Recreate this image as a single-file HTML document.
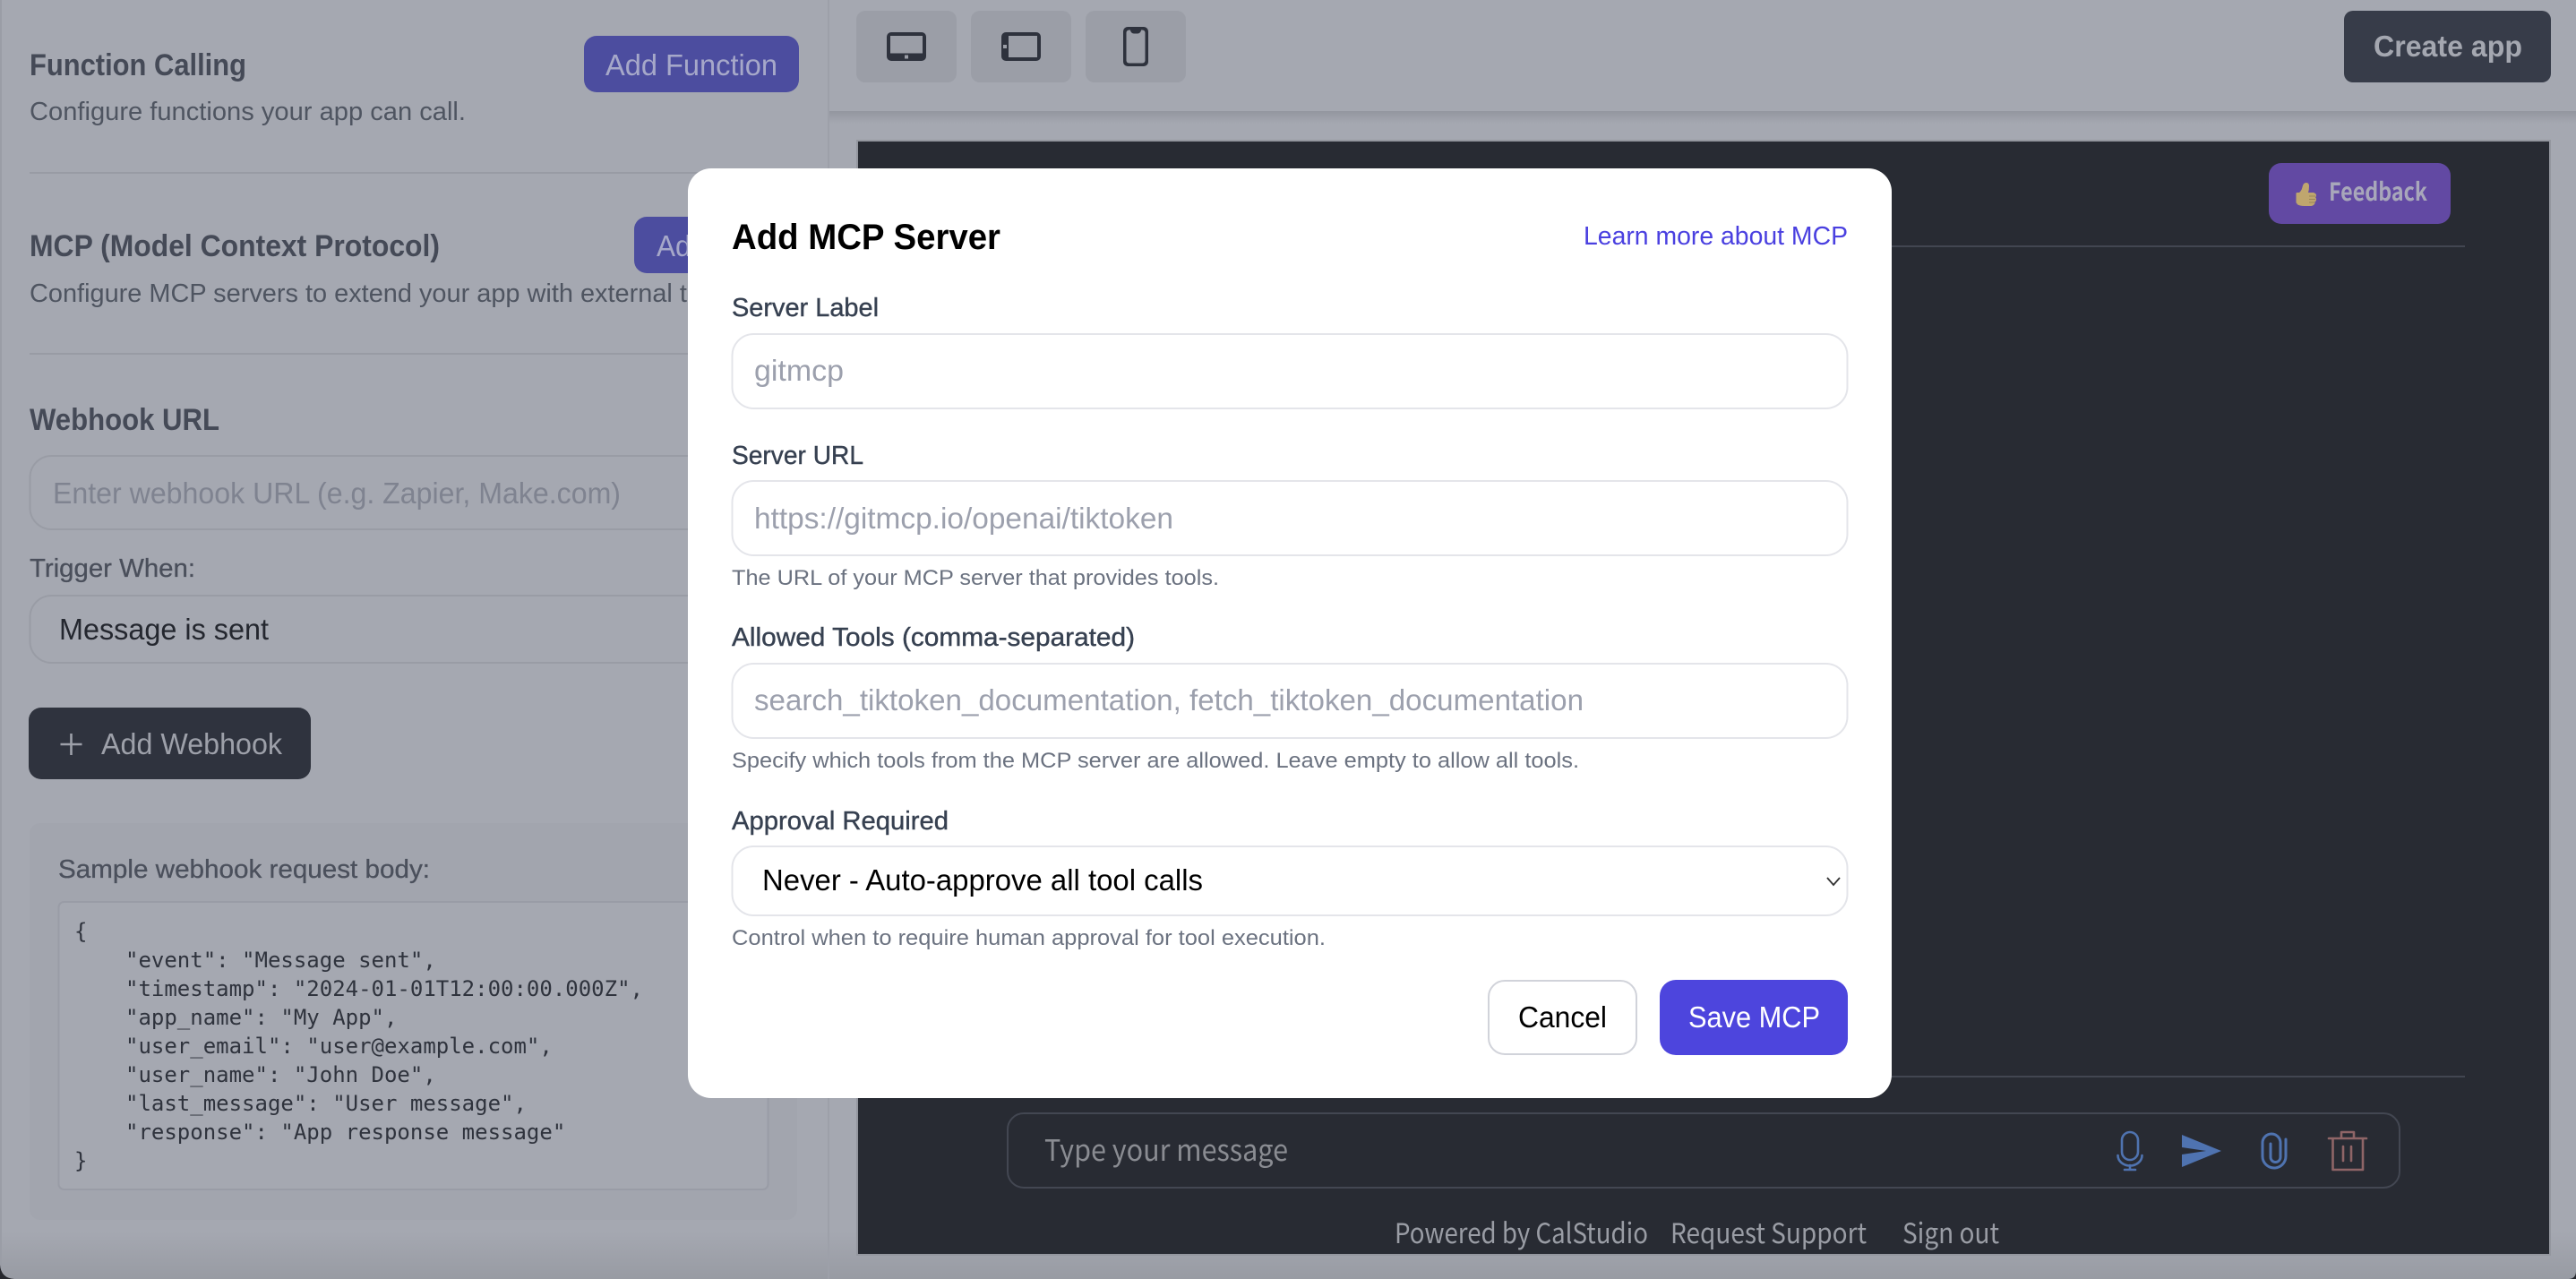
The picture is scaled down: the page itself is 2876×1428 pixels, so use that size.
<!DOCTYPE html>
<html lang="en">
<head>
<meta charset="utf-8">
<title>Add MCP Server</title>
<style>
html,body{margin:0;padding:0;width:2876px;height:1428px;overflow:hidden;background:#a5a8b1}
svg{display:block;position:absolute;left:0;top:0}
text{font-family:"Liberation Sans","Noto Sans CJK SC",sans-serif;white-space:pre}
.n{font-family:"Noto Sans CJK JP","Liberation Sans",sans-serif}
.m{font-family:"DejaVu Sans Mono","Liberation Mono",monospace;font-size:24px;fill:#2f333d}
.l{stroke:#374151;stroke-width:.4px}
</style>
</head>
<body>
<svg width="2876" height="1428" viewBox="0 0 2876 1428" xmlns="http://www.w3.org/2000/svg">
<defs>
<linearGradient id="sh" x1="0" y1="0" x2="0" y2="1"><stop offset="0" stop-color="#93969f"/><stop offset="1" stop-color="#a5a8b1"/></linearGradient>
<linearGradient id="bt" x1="0" y1="0" x2="0" y2="1"><stop offset="0" stop-color="#a5a8b1"/><stop offset="1" stop-color="#989ba3"/></linearGradient>
</defs>
<rect width="2876" height="1428" fill="#a5a8b1"/>
<rect x="0" y="1375" width="2876" height="53" fill="url(#bt)"/>
<rect x="0" y="0" width="2" height="1428" fill="#9a9da6"/>
<path d="M0 1412 Q1 1427 16 1428 H0Z" fill="#26282e"/>
<path d="M2876 1420 Q2875.500 1427.500 2868 1428 H2876Z" fill="#26282e"/>
<rect x="924" y="0" width="2" height="1428" fill="#9da0a9"/>

<!-- left panel -->
<text x="33" y="84" font-size="34" font-weight="700" fill="#454a57" textLength="242" lengthAdjust="spacingAndGlyphs">Function Calling</text>
<text x="33" y="134" font-size="28.500" fill="#4f5561" textLength="487" lengthAdjust="spacingAndGlyphs">Configure functions your app can call.</text>
<rect x="652" y="40" width="240" height="63" rx="14" fill="#4c4d9f"/>
<text x="676" y="84" font-size="33" fill="#a6a8c9" textLength="192" lengthAdjust="spacingAndGlyphs">Add Function</text>
<rect x="33" y="192" width="860" height="2" fill="#989ba4"/>

<text x="33" y="286" font-size="34" font-weight="700" fill="#454a57" textLength="458" lengthAdjust="spacingAndGlyphs">MCP (Model Context Protocol)</text>
<rect x="708" y="242" width="184" height="63" rx="14" fill="#4c4d9f"/>
<text x="733" y="286" font-size="33" fill="#a6a8c9" textLength="135" lengthAdjust="spacingAndGlyphs">Add MCP</text>
<text x="33" y="337" font-size="28.500" fill="#4f5561" textLength="795" lengthAdjust="spacingAndGlyphs">Configure MCP servers to extend your app with external tools.</text>
<rect x="33" y="394" width="860" height="2" fill="#989ba4"/>

<text x="33" y="480" font-size="34" font-weight="700" fill="#454a57" textLength="212" lengthAdjust="spacingAndGlyphs">Webhook URL</text>
<rect x="33.500" y="509" width="858" height="82" rx="24" fill="#a5a8b1" stroke="#999ca5" stroke-width="2"/>
<text x="59" y="562" font-size="33" fill="#7f8390" textLength="634" lengthAdjust="spacingAndGlyphs">Enter webhook URL (e.g. Zapier, Make.com)</text>
<text x="33" y="644" font-size="28.500" fill="#4a4f5b" stroke="#4a4f5b" stroke-width=".3" textLength="185" lengthAdjust="spacingAndGlyphs">Trigger When:</text>
<rect x="33.500" y="665" width="858" height="75" rx="24" fill="#a5a8b1" stroke="#999ca5" stroke-width="2"/>
<text x="66" y="714" font-size="33" fill="#24272f" textLength="234" lengthAdjust="spacingAndGlyphs">Message is sent</text>

<rect x="32" y="790" width="315" height="80" rx="14" fill="#2f333e"/>
<path d="M79.500 819V843M67.500 831H91.500" stroke="#9da0a9" stroke-width="2.600" fill="none"/>
<text x="113" y="842" font-size="33" fill="#9da0a9" textLength="202" lengthAdjust="spacingAndGlyphs">Add Webhook</text>

<rect x="33" y="919" width="857" height="443" rx="12" fill="#a2a5ae"/>
<text x="65" y="980" font-size="28.500" fill="#4b505c" stroke="#4b505c" stroke-width=".3" textLength="415" lengthAdjust="spacingAndGlyphs">Sample webhook request body:</text>
<rect x="65.500" y="1007" width="792" height="321" rx="6" fill="#a5a8b1" stroke="#999ca6" stroke-width="2"/>
<text class="m" x="83" y="1048">{</text>
<text class="m" x="140" y="1080">"event": "Message sent",</text>
<text class="m" x="140" y="1112">"timestamp": "2024-01-01T12:00:00.000Z",</text>
<text class="m" x="140" y="1144">"app_name": "My App",</text>
<text class="m" x="140" y="1176">"user_email": "user@example.com",</text>
<text class="m" x="140" y="1208">"user_name": "John Doe",</text>
<text class="m" x="140" y="1240">"last_message": "User message",</text>
<text class="m" x="140" y="1272">"response": "App response message"</text>
<text class="m" x="83" y="1304">}</text>

<!-- top bar -->
<rect x="926" y="124" width="1950" height="14" fill="url(#sh)"/>
<rect x="956" y="12" width="112" height="80" rx="10" fill="#9b9ea7"/>
<rect x="1084" y="12" width="112" height="80" rx="10" fill="#9b9ea7"/>
<rect x="1212" y="12" width="112" height="80" rx="10" fill="#9b9ea7"/>
<rect x="990" y="36" width="44" height="32" rx="5" fill="#2e323d"/>
<rect x="994" y="40" width="36" height="19.500" fill="#9b9ea7"/>
<rect x="1010" y="61.500" width="4" height="4" fill="#9b9ea7"/>
<rect x="1118" y="36" width="44" height="32" rx="5" fill="#2e323d"/>
<rect x="1126" y="40" width="32" height="24" fill="#9b9ea7"/>
<rect x="1120" y="50" width="4" height="4" fill="#9b9ea7"/>
<rect x="1254" y="30" width="28" height="44" rx="5" fill="#2e323d"/>
<rect x="1257.500" y="33.500" width="21" height="37" rx="3" fill="#9b9ea7"/>
<path d="M1262 32H1274V34Q1273 37.500 1270 37.500H1266Q1263 37.500 1262 34Z" fill="#2e323d"/>
<rect x="2617" y="12" width="231" height="80" rx="10" fill="#373c49"/>
<text x="2650" y="63" font-size="33.500" font-weight="700" fill="#a4a7b0" textLength="166" lengthAdjust="spacingAndGlyphs">Create app</text>

<!-- preview -->
<rect x="956" y="156" width="1892" height="1246" fill="#94979f"/>
<rect x="958" y="158" width="1888" height="1242" fill="#282b33"/>
<rect x="958" y="274" width="1794" height="2" fill="#424651"/>
<rect x="958" y="1201" width="1794" height="2" fill="#424651"/>
<rect x="2533" y="182" width="203" height="68" rx="14" fill="#6249a3"/>
<path d="M2575 204q3 0 3 4q0 4-1 7h6q3 1 3 3t-1 2q1 1 1 3t-1.500 2q.500 2-1 3.500t-3 1.500h-8q-5 0-8-2v-11q5-3 6-8t4-5z" fill="#bfa66e"/>
<rect x="2563.500" y="215" width="4.500" height="12" rx="1" fill="#bfa66e"/>
<path d="M2578 219H2585M2578 222.500H2585M2578 226H2584" stroke="#9a8558" stroke-width="1" fill="none"/>
<text class="n" x="2600" y="224" font-size="28" font-weight="700" fill="#a8a7ba" textLength="110" lengthAdjust="spacingAndGlyphs">Feedback</text>

<rect x="1125" y="1243" width="1554" height="83" rx="18" fill="#282b33" stroke="#434752" stroke-width="2"/>
<text class="n" x="1166" y="1296" font-size="33" fill="#8a8c92" textLength="272" lengthAdjust="spacingAndGlyphs">Type your message</text>
<g fill="none" stroke="#4f73b0" stroke-width="2.600" stroke-linecap="round">
<rect x="2369" y="1264" width="18" height="31" rx="9"/>
<path d="M2364.500 1290a13.500 11.500 0 0 0 27 0M2378 1301V1305M2372 1306H2384"/>
</g>
<path d="M2436 1267L2480 1285L2436 1303V1289L2463 1285L2436 1281Z" fill="#4f73b0"/>
<path d="M2552 1272V1291a13 13 0 0 1-26 0V1276a10 10 0 0 1 20 0V1292a5.500 5.500 0 0 1-11 0V1277" fill="none" stroke="#4f73b0" stroke-width="3" stroke-linecap="round"/>
<g fill="none" stroke="#8f6567" stroke-width="2.600" stroke-linecap="round" stroke-linejoin="round">
<path d="M2600 1271H2642M2614 1271V1264H2628V1271M2604.500 1271V1306H2638V1271M2616 1280V1296M2625 1280V1296"/>
</g>
<text class="n" x="1557" y="1388" font-size="31" fill="#9a9da5" textLength="283" lengthAdjust="spacingAndGlyphs">Powered by CalStudio</text>
<text class="n" x="1865" y="1388" font-size="31" fill="#9a9da5" textLength="219" lengthAdjust="spacingAndGlyphs">Request Support</text>
<text class="n" x="2124" y="1388" font-size="31" fill="#9a9da5" textLength="108" lengthAdjust="spacingAndGlyphs">Sign out</text>

<!-- modal -->
<rect x="768" y="188" width="1344" height="1038" rx="26" fill="#ffffff"/>
<text x="817" y="278" font-size="40" font-weight="700" fill="#000000" textLength="300" lengthAdjust="spacingAndGlyphs">Add MCP Server</text>
<text x="1768" y="273" font-size="28.500" fill="#4a40e0" textLength="295" lengthAdjust="spacingAndGlyphs">Learn more about MCP</text>

<text class="l" x="817" y="353" font-size="28.500" fill="#374151" textLength="164" lengthAdjust="spacingAndGlyphs">Server Label</text>
<rect x="817.500" y="373" width="1245" height="83" rx="24" fill="#fff" stroke="#e4e5ea" stroke-width="2"/>
<text x="842" y="425" font-size="33" fill="#9ca0ad" textLength="100" lengthAdjust="spacingAndGlyphs">gitmcp</text>

<text class="l" x="817" y="518" font-size="28.500" fill="#374151" textLength="147" lengthAdjust="spacingAndGlyphs">Server URL</text>
<rect x="817.500" y="537" width="1245" height="83" rx="24" fill="#fff" stroke="#e4e5ea" stroke-width="2"/>
<text x="842" y="590" font-size="33" fill="#9ca0ad" textLength="468" lengthAdjust="spacingAndGlyphs">https://gitmcp.io/openai/tiktoken</text>
<text x="817" y="653" font-size="24" fill="#6b7280" textLength="544" lengthAdjust="spacingAndGlyphs">The URL of your MCP server that provides tools.</text>

<text class="l" x="817" y="721" font-size="28.500" fill="#374151" textLength="450" lengthAdjust="spacingAndGlyphs">Allowed Tools (comma-separated)</text>
<rect x="817.500" y="741" width="1245" height="83" rx="24" fill="#fff" stroke="#e4e5ea" stroke-width="2"/>
<text x="842" y="793" font-size="33" fill="#9ca0ad" textLength="926" lengthAdjust="spacingAndGlyphs">search_tiktoken_documentation, fetch_tiktoken_documentation</text>
<text x="817" y="857" font-size="24" fill="#6b7280" textLength="946" lengthAdjust="spacingAndGlyphs">Specify which tools from the MCP server are allowed. Leave empty to allow all tools.</text>

<text class="l" x="817" y="926" font-size="28.500" fill="#374151" textLength="242" lengthAdjust="spacingAndGlyphs">Approval Required</text>
<rect x="817.500" y="945" width="1245" height="77" rx="24" fill="#fff" stroke="#e4e5ea" stroke-width="2"/>
<text x="851" y="994" font-size="33" fill="#000" textLength="492" lengthAdjust="spacingAndGlyphs">Never - Auto-approve all tool calls</text>
<path d="M2040 980L2047 988L2054 980" fill="none" stroke="#333" stroke-width="1.800"/>
<text x="817" y="1055" font-size="24" fill="#6b7280" textLength="663" lengthAdjust="spacingAndGlyphs">Control when to require human approval for tool execution.</text>

<rect x="1662" y="1095" width="165" height="82" rx="18" fill="#fff" stroke="#d1d3da" stroke-width="2"/>
<text x="1695" y="1147" font-size="33" fill="#000" textLength="99" lengthAdjust="spacingAndGlyphs">Cancel</text>
<rect x="1853" y="1094" width="210" height="84" rx="18" fill="#4d45dd"/>
<text x="1885" y="1147" font-size="33" fill="#fff" textLength="147" lengthAdjust="spacingAndGlyphs">Save MCP</text>
</svg>
</body>
</html>
